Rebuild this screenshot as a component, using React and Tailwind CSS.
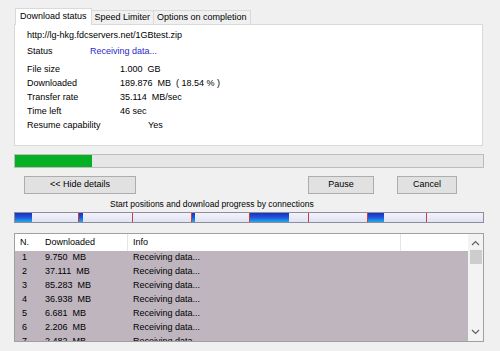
import React from "react";

const info = [
  { label: "File size", value: "1.000  GB" },
  { label: "Downloaded", value: "189.876  MB  ( 18.54 % )" },
  { label: "Transfer rate", value: "35.114  MB/sec" },
  { label: "Time left", value: "46 sec" },
];

const connections = [
  ["1", "9.750  MB"],
  ["2", "37.111  MB"],
  ["3", "85.283  MB"],
  ["4", "36.938  MB"],
  ["5", "6.681  MB"],
  ["6", "2.206  MB"],
  ["7", "2.482  MB"],
];

// start offset, progress width (px inside a 470px bar)
const segments = [
  [0, 17],
  [64, 4],
  [118, 0],
  [177, 3],
  [235, 39],
  [294, 0],
  [353, 16],
  [412, 0],
];

function ConnectionBar() {
  return (
    <svg width="470" height="11" viewBox="0 0 470 11" className="block">
      <defs>
        <linearGradient id="bg" x1="0" y1="0" x2="0" y2="1">
          <stop offset="0" stopColor="#f2f3fa" />
          <stop offset="1" stopColor="#dfe2f2" />
        </linearGradient>
        <linearGradient id="blue" x1="0" y1="0" x2="0" y2="1">
          <stop offset="0" stopColor="#1a2fc0" />
          <stop offset="0.5" stopColor="#1f58d8" />
          <stop offset="1" stopColor="#22a8ee" />
        </linearGradient>
      </defs>
      <rect x="0.5" y="0.5" width="469" height="10" fill="url(#bg)" stroke="#8d8d9c" />
      {segments.map(([x, w], i) => (
        <g key={i}>
          {w > 0 && <rect x={x + 1} y="1" width={w} height="9" fill="url(#blue)" />}
          {i > 0 && <rect x={x} y="1" width="1" height="9" fill="#d23a3a" />}
        </g>
      ))}
    </svg>
  );
}

function Btn({ children, w }) {
  return (
    <div
      className={`${w} h-[18px] flex items-center justify-center bg-[#e1e1e1] border border-[#adadad] text-[9px]`}
    >
      {children}
    </div>
  );
}

export default function App() {
  return (
    <div
      className="w-[500px] h-[351px] bg-[#f0f0f0] overflow-hidden text-black text-[9px]"
      style={{ fontFamily: '"Liberation Sans", Arial, sans-serif' }}
    >
      {/* tabs */}
      <div className="flex items-end pt-[8px] pl-[15px] h-[25px]">
        <div className="relative z-10 h-[17px] px-[4px] bg-white border border-b-0 border-[#d9d9d9] flex items-center">
          Download status
        </div>
        <div className="h-[15px] px-[3px] border border-l-0 border-b-0 border-[#d9d9d9] flex items-center">
          Speed Limiter
        </div>
        <div className="h-[15px] px-[3px] border border-l-0 border-b-0 border-[#d9d9d9] flex items-center">
          Options on completion
        </div>
      </div>

      {/* details panel */}
      <div className="-mt-px ml-[14px] w-[469px] h-[122px] bg-white border border-[#d9d9d9] pl-[12px] pt-[3px]">
        <div className="leading-[14px]">http://lg-hkg.fdcservers.net/1GBtest.zip</div>
        <div className="leading-[14px] mt-[2px] flex">
          <span className="w-[63px]">Status</span>
          <span className="text-[#2a2acc]">Receiving data...</span>
        </div>
        <div className="mt-[4px]">
          {info.map((r) => (
            <div key={r.label} className="leading-[14px] flex">
              <span className="w-[93px]">{r.label}</span>
              <span className="whitespace-pre">{r.value}</span>
            </div>
          ))}
          <div className="leading-[14px] flex">
            <span className="w-[121px]">Resume capability</span>
            <span>Yes</span>
          </div>
        </div>
      </div>

      {/* overall progress */}
      <div className="mt-[8px] ml-[14px] w-[470px] h-[14px] bg-[#e6e6e6] border border-[#bcbcbc]">
        <div className="w-[77px] h-full bg-[#06b025]" />
      </div>

      {/* buttons */}
      <div className="flex mt-[8px] ml-[24px]">
        <Btn w="w-[112px]">&lt;&lt; Hide details</Btn>
        <div className="ml-[172px]">
          <Btn w="w-[66px]">Pause</Btn>
        </div>
        <div className="ml-[23px]">
          <Btn w="w-[60px]">Cancel</Btn>
        </div>
      </div>

      <div className="mt-[4px] ml-[110px] leading-[12px] text-[8.5px]">
        Start positions and download progress by connections
      </div>

      <div className="mt-[2px] ml-[14px]">
        <ConnectionBar />
      </div>

      {/* connections table */}
      <div className="mt-[10px] ml-[14px] w-[470px] h-[109px] border border-[#a0a0a0] bg-white flex overflow-hidden">
        <div className="flex-1 flex flex-col">
          <div className="h-[17px] flex items-center bg-white shrink-0">
            <div className="w-[26px] pl-[5px]">N.</div>
            <div className="w-[87px] pl-[4px] h-full flex items-center border-r border-[#e5e5e5]">
              Downloaded
            </div>
            <div className="w-[273px] pl-[5px] h-full flex items-center border-r border-[#e5e5e5]">
              Info
            </div>
          </div>
          <div className="flex-1 bg-[#bfb5be]">
            {connections.map(([n, d]) => (
              <div key={n} className="h-[14px] flex items-center">
                <div className="w-[26px] pl-[7px]">{n}</div>
                <div className="w-[87px] pl-[4px] whitespace-pre">{d}</div>
                <div className="pl-[5px]">Receiving data...</div>
              </div>
            ))}
          </div>
        </div>
        <div className="w-[15px] bg-[#f3f3f3] flex flex-col items-center">
          <svg width="9" height="6" viewBox="0 0 9 6" className="mt-[6px]">
            <path d="M1 5 L4.5 1.5 L8 5" fill="none" stroke="#606060" strokeWidth="1.2" />
          </svg>
          <div className="mt-[4px] w-[12px] h-[14px] bg-[#cdcdcd]" />
          <div className="flex-1" />
          <svg width="9" height="6" viewBox="0 0 9 6" className="mb-[6px]">
            <path d="M1 1 L4.5 4.5 L8 1" fill="none" stroke="#606060" strokeWidth="1.2" />
          </svg>
        </div>
      </div>
    </div>
  );
}
